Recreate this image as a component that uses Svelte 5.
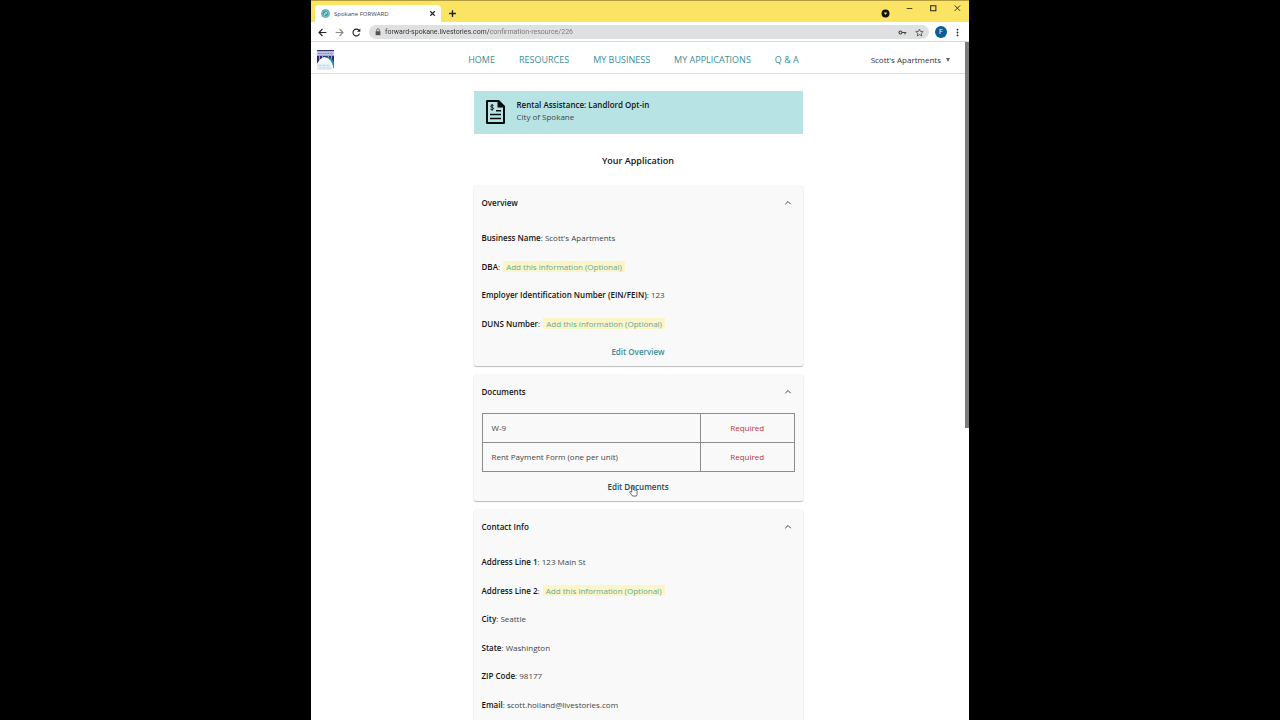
<script>
  const navLinks = ['HOME', 'RESOURCES', 'MY BUSINESS', 'MY APPLICATIONS', 'Q & A'];

  const overview = [
    { label: 'Business Name', value: "Scott's Apartments" },
    { label: 'DBA' },
    { label: 'Employer Identification Number (EIN/FEIN)', value: '123' },
    { label: 'DUNS Number' }
  ];

  const documents = [
    { name: 'W-9', status: 'Required' },
    { name: 'Rent Payment Form (one per unit)', status: 'Required' }
  ];

  const contact = [
    { label: 'Address Line 1', value: '123 Main St' },
    { label: 'Address Line 2' },
    { label: 'City', value: 'Seattle' },
    { label: 'State', value: 'Washington' },
    { label: 'ZIP Code', value: '98177' },
    { label: 'Email', value: 'scott.hoiland@livestories.com' }
  ];

  let open = $state({ overview: true, documents: true, contact: true });
  let url = $state('forward-spokane.livestories.com/confirmation-resource/226');
</script>

{#snippet cardHeader(title, key)}
  <h2>
    <button class="card-header" aria-expanded={open[key]} onclick={() => (open[key] = !open[key])}>
      <span>{title}</span>
      <svg class="chevron" class:closed={!open[key]} viewBox="0 0 8 8" aria-hidden="true">
        <path d="M1.300 5.200 4 2.500l2.700 2.700" />
      </svg>
    </button>
  </h2>
{/snippet}

{#snippet fieldRows(rows)}
  {#each rows as row}
    <p class="row">
      <strong>{row.label}</strong>:
      {#if row.value}{row.value}{:else}<a class="add" href="#add">Add this information (Optional)</a>{/if}
    </p>
  {/each}
{/snippet}

<div class="window">
  <header class="tab-strip">
    <div class="tab">
      <svg class="favicon" viewBox="0 0 9 9" aria-hidden="true">
        <circle cx="4.5" cy="4.5" r="4.3" fill="#2a97a5" />
        <circle cx="4.5" cy="4.5" r="3.2" fill="none" stroke="#bfe9ec" stroke-width=".6" />
        <path d="M3.400 6.500c-.2-2.300.6-3.300 2.600-3.300-.1 1.300-.8 1.900-2.300 1.900" fill="none" stroke="#d8f4f5" stroke-width=".8" />
      </svg>
      <span class="tab-title">Spokane FORWARD</span>
      <button class="icon" aria-label="Close tab">
        <svg viewBox="0 0 8 8"><path d="m2 2 4 4M6 2 2 6" stroke-width="1" /></svg>
      </button>
    </div>
    <button class="icon new-tab" aria-label="New tab">
      <svg viewBox="0 0 8 8"><path d="M4 1v6M1 4h6" stroke-width="1.2" /></svg>
    </button>
    <div class="window-controls">
      <button class="icon media" aria-label="Tab search">
        <svg viewBox="0 0 8 8"><circle cx="4" cy="4" r="3.5" fill="#111" stroke="none" /><path d="M2.500 3.200h3L4 5.400z" fill="#fbe364" stroke="none" /></svg>
      </button>
      <button class="icon" aria-label="Minimize">
        <svg viewBox="0 0 8 8"><path d="M1.500 4h5" stroke-width=".7" /></svg>
      </button>
      <button class="icon" aria-label="Maximize">
        <svg viewBox="0 0 8 8"><path d="M1.500 1.500h4.600v4.600H1.500z" stroke-width=".9" /></svg>
      </button>
      <button class="icon" aria-label="Close window">
        <svg viewBox="0 0 8 8"><path d="m1.500 1.300 4.800 4.800M6.300 1.300 1.500 6.100" stroke-width=".8" /></svg>
      </button>
    </div>
  </header>

  <div class="toolbar">
    <button class="icon" aria-label="Back">
      <svg viewBox="0 0 8 8"><path d="M7.400 4H.9M4 .9.9 4 4 7.100" /></svg>
    </button>
    <button class="icon muted" aria-label="Forward">
      <svg viewBox="0 0 8 8"><path d="M.6 4h6.500M4 .9 7.100 4 4 7.100" /></svg>
    </button>
    <button class="icon" aria-label="Reload">
      <svg viewBox="0 0 8 8"><path d="M6.700 5A3 3 0 1 1 6.200 2.100" /><path d="M7.400.4v3H4.400z" fill="#222" stroke="none" /></svg>
    </button>
    <div class="omnibox">
      <svg class="lock" viewBox="0 0 6 8" aria-hidden="true">
        <path d="M.6 3.200h4.800v4H.6z" fill="#555" /><path d="M1.600 3.400V2.200a1.400 1.400 0 0 1 2.800 0v1.200" fill="none" stroke="#555" stroke-width=".8" />
      </svg>
      <input type="text" aria-label="Address" bind:value={url} spellcheck="false" />
      <button class="icon" aria-label="Saved passwords">
        <svg viewBox="0 0 8 8"><circle cx="2.200" cy="4" r="1.300" stroke="#444" /><path d="M3.600 4h3.800M6.200 4v1.500" stroke="#444" stroke-width="1.100" /></svg>
      </button>
      <button class="icon" aria-label="Bookmark this page">
        <svg viewBox="0 0 8 8"><path d="m4 .9.9 2.100 2.400.2-1.800 1.600.5 2.300-2-1.200-2 1.200.5-2.300L.7 3.200 3.100 3z" stroke="#444" stroke-width=".7" /></svg>
      </button>
    </div>
    <div class="profile">
      <button class="avatar" aria-label="Profile F">F</button>
      <button class="icon" aria-label="Browser menu">
        <svg viewBox="0 0 8 8"><g fill="#222" stroke="none"><circle cx="4" cy="1.400" r=".8" /><circle cx="4" cy="4" r=".8" /><circle cx="4" cy="6.600" r=".8" /></g></svg>
      </button>
    </div>
  </div>

  <div class="viewport">
    <div class="site-header">
      <a class="logo" href="#home" aria-label="Spokane">
        <svg viewBox="0 0 17 20">
          <path d="M0 0h17v1.500H0z" fill="#34347a" />
          <path d="M0 1.500h17v4.300H0z" fill="#c3c5e4" />
          <path d="M1 3.500h15" stroke="#8083bd" stroke-width="1.200" stroke-dasharray="1.600 .8" />
          <path d="M0 5.800h17v8C14 9 12 7 8.500 7S3 9 0 14z" fill="#2b2b75" />
          <path d="M2.500 6v4M5.500 6v2M11.500 6v2M14.500 6v4" stroke="#b9bbe0" stroke-width=".8" />
          <path d="M1.500 13.500C3 9.500 5 8 7.500 8S12 10 13 13.500z" fill="#f4fbff" />
          <path d="M8.500 7.200c4 .5 7 4 8.500 11V13c-1.500-4-4-6-8.500-5.800z" fill="#1c91aa" stroke="#1c91aa" />
          <path d="M0 13.500h13l3 6.500H0z" fill="#e6f1f9" />
          <path d="M0 15.500h13M0 18h15M3 13.500v6.500M7 13.500v6.500M11 13.500v6.500" stroke="#b5d1e6" stroke-width=".5" />
        </svg>
      </a>
      <nav>
        {#each navLinks as link}
          <a href="#nav">{link}</a>
        {/each}
      </nav>
      <button class="account" aria-haspopup="menu">Scott's Apartments <span class="caret"></span></button>
    </div>

    <main>
      <section class="banner">
        <svg viewBox="0 0 19 24" aria-hidden="true">
          <path d="M1.200 0H13l6 6v16.800q0 1.200-1.200 1.200H1.200Q0 24 0 22.800V1.200Q0 0 1.200 0z" fill="#060b0c" />
          <path d="M2 2h9.500v5.500H17V22H2z" fill="#b7e3e4" />
          <path d="M4 14.500h11M4 18.500h11M10 10.800h5" stroke="#060b0c" stroke-width="1.400" />
          <path d="M7.600 5.600C6.800 4.700 4.600 4.900 4.600 6.200c0 1.500 3 .8 3 2.300 0 1.300-2.300 1.500-3.200.5M6.100 4v6.800" fill="none" stroke="#060b0c" stroke-width=".9" />
        </svg>
        <div>
          <strong>Rental Assistance: Landlord Opt-in</strong>
          <span>City of Spokane</span>
        </div>
      </section>

      <h1>Your Application</h1>

      <section class="card">
        {@render cardHeader('Overview', 'overview')}
        {#if open.overview}
          <div class="card-body">
            {@render fieldRows(overview)}
            <a class="edit" href="#overview">Edit Overview</a>
          </div>
        {/if}
      </section>

      <section class="card">
        {@render cardHeader('Documents', 'documents')}
        {#if open.documents}
          <div class="card-body">
            <table>
              <tbody>
                {#each documents as doc}
                  <tr>
                    <td>{doc.name}</td>
                    <td class="status">{doc.status}</td>
                  </tr>
                {/each}
              </tbody>
            </table>
            <a class="edit hovered" href="#documents">
              Edit Documents
              <svg class="pointer" viewBox="0 0 10 13" aria-hidden="true">
                <path d="M3 7.800V1.700q0-1 .8-1t.8 1v3.600q.8-.7 1.500.2.900-.6 1.400.3 1.400-.5 1.500.8v2.600q0 1.500-.8 2.900H4Q2.300 9.800.9 8.200q-.5-.9.300-1.100T3 7.800z" fill="#fff" stroke="#333" stroke-width=".8" stroke-linejoin="round" />
              </svg>
            </a>
          </div>
        {/if}
      </section>

      <section class="card">
        {@render cardHeader('Contact Info', 'contact')}
        {#if open.contact}
          <div class="card-body">
            {@render fieldRows(contact)}
          </div>
        {/if}
      </section>
    </main>
    <div class="scroll-thumb"></div>
  </div>
</div>

<style>
  :global(body) {
    margin: 0;
    background: #000;
  }

  .window {
    display: flex;
    flex-direction: column;
    width: 100%;
    max-width: 658px;
    height: 100vh;
    margin: 0 auto;
    overflow: hidden;
    background: #fff;
    color: #444;
    font: 8px/12px 'Open Sans', 'Noto Sans', sans-serif;
  }

  button,
  input {
    padding: 0;
    border: 0;
    background: none;
    color: inherit;
    font: inherit;
  }

  a {
    color: #3b8d96;
    text-decoration: none;
  }

  strong {
    color: #151515;
    font-weight: 600;
  }

  .icon {
    display: flex;
    flex: none;
  }

  .icon svg {
    width: 9px;
    height: 9px;
    fill: none;
    stroke: #222;
  }

  .icon.muted svg {
    stroke: #888;
  }

  /* Browser frame */
  .tab-strip {
    display: flex;
    flex: none;
    align-items: flex-end;
    box-sizing: border-box;
    height: 22px;
    padding: 0 7px 0 4px;
    border-top: 1px solid #b39c3c;
    background: #fbe364;
  }

  .tab {
    display: flex;
    align-items: center;
    gap: 4px;
    box-sizing: border-box;
    width: 126px;
    height: 17px;
    padding: 0 4px 0 6px;
    border-radius: 4px 4px 0 0;
    background: #fff;
    font-size: 6px;
  }

  .favicon {
    width: 9px;
    height: 9px;
  }

  .tab-title {
    flex: 1;
  }

  .new-tab {
    margin: 0 0 4px 7px;
  }

  .window-controls {
    display: flex;
    align-items: flex-start;
    align-self: flex-start;
    gap: 15px;
    margin: 3px 0 0 auto;
  }

  .media {
    margin-top: 5px;
  }

  .toolbar {
    display: flex;
    flex: none;
    align-items: center;
    gap: 8px;
    box-sizing: border-box;
    height: 20px;
    padding: 1px 7px 0;
    border-bottom: 1px solid #d8d8d8;
    font-family: Roboto, sans-serif;
    font-size: 7px;
  }

  .omnibox {
    display: flex;
    flex: 1;
    align-items: center;
    gap: 8px;
    height: 14px;
    margin-right: -2px;
    padding: 0 5px 0 6px;
    border-radius: 7px;
    background: #dfe0e1;
  }

  .lock {
    width: 6px;
    height: 8px;
    margin-right: -4px;
  }

  .omnibox input {
    flex: 1;
    min-width: 0;
    height: 14px;
    outline: none;
    background: linear-gradient(90deg, #333 55%, #777 0) 0 0 / 190px 100% no-repeat;
    background-clip: text;
    -webkit-background-clip: text;
    color: transparent;
  }

  .profile {
    display: flex;
    align-items: center;
    gap: 6px;
  }

  .avatar {
    flex: none;
    width: 12px;
    height: 12px;
    border-radius: 50%;
    background: #0d5c97;
    color: #fff;
    text-align: center;
  }

  /* Site */
  .viewport {
    position: relative;
    flex: 1;
    min-height: 0;
    padding-right: 4px;
    overflow: hidden;
  }

  .scroll-thumb {
    position: absolute;
    top: 0;
    right: 0;
    width: 4px;
    height: 56.9%;
    background: #7b7b7b;
  }

  .site-header {
    display: grid;
    grid-template-columns: 1fr auto 1fr;
    align-items: center;
    box-sizing: border-box;
    height: 32px;
    padding: 5px 15px 0 6px;
    border-bottom: 1px solid #ddd;
  }

  .logo svg {
    display: block;
    width: 17px;
    height: 20px;
  }

  nav {
    display: flex;
    gap: 24px;
    font-size: 9px;
    font-weight: 500;
  }

  .account {
    justify-self: end;
    display: flex;
    align-items: center;
    gap: 5px;
    color: #333;
  }

  .caret {
    border: 2px solid transparent;
    border-top: 4px solid #666;
    border-bottom: 0;
  }

  main {
    display: flex;
    flex-direction: column;
    max-width: 329px;
    margin: 0 auto;
    padding-top: 17px;
  }

  .banner {
    display: flex;
    align-items: flex-start;
    gap: 12px;
    box-sizing: border-box;
    height: 43px;
    padding: 8px 12px;
    background: #b7e3e4;
  }

  .banner svg {
    width: 19px;
    height: 26px;
  }

  .banner div {
    display: flex;
    flex-direction: column;
  }

  h1 {
    margin: 20px 0 18px;
    color: #151515;
    font-size: 9px;
    font-weight: 600;
    line-height: 14px;
    text-align: center;
  }

  .card {
    margin-bottom: 9px;
    border-radius: 2px;
    background: #f9f9f9;
    box-shadow: 0 1px 1px #bbb, 0 0 2px #e2e2e2;
  }

  .card:last-child {
    padding-bottom: 32px;
  }

  h2 {
    margin: 0;
    font: inherit;
  }

  .card-header {
    display: flex;
    align-items: center;
    justify-content: space-between;
    width: 100%;
    height: 34px;
    padding: 0 11px 0 8px;
    color: #151515;
    font-weight: 600;
  }

  .chevron {
    width: 8px;
    height: 8px;
    fill: none;
    stroke: #444;
  }

  .chevron.closed {
    transform: rotate(180deg);
  }

  .card-body {
    display: flex;
    flex-direction: column;
    padding: 4px 8px 0;
  }

  .row {
    margin: 0;
    line-height: 28px;
  }

  .row:nth-child(even) {
    line-height: 29px;
  }

  .add {
    margin-left: 1px;
    padding: 0 3px;
    background: #fcf5c7;
    color: #5fa9a0;
  }

  .edit {
    position: relative;
    align-self: center;
    font-weight: 600;
    line-height: 28px;
  }

  .edit.hovered {
    color: #174f57;
  }

  .pointer {
    position: absolute;
    top: 12px;
    left: 22px;
    width: 9px;
    height: 12px;
  }

  table {
    width: 100%;
    margin-bottom: 1px;
    border-collapse: collapse;
  }

  td {
    height: 28px;
    padding: 0 9px;
    border: 1px solid #8c8c8c;
  }

  .status {
    width: 30%;
    box-sizing: border-box;
    color: #c0323f;
    text-align: center;
  }
</style>
